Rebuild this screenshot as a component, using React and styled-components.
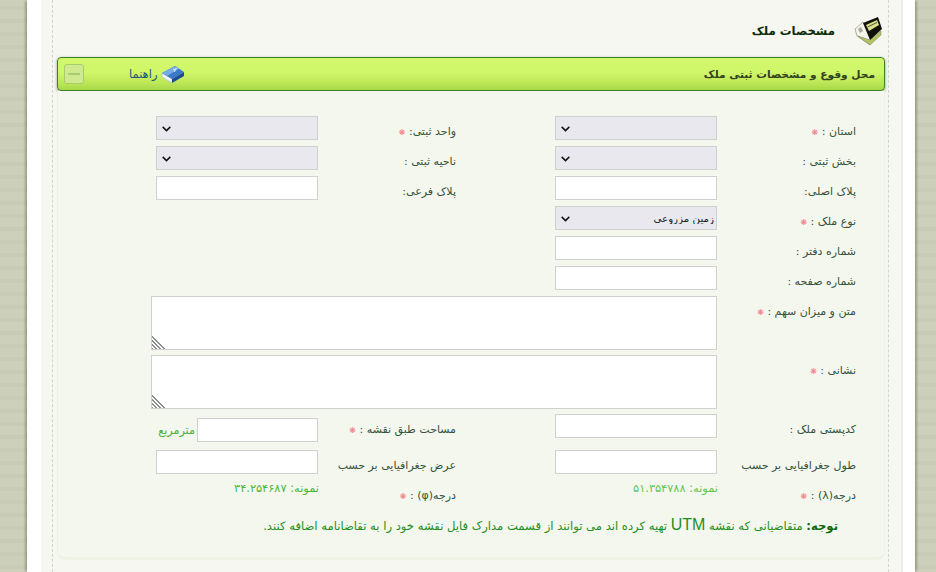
import React from "react";
import styled, { createGlobalStyle } from "styled-components";

const Global = createGlobalStyle`
  html, body { margin: 0; padding: 0; height: 572px; overflow: hidden; }
  body {
    background-color: #cbceb9;
    background-image:
      repeating-linear-gradient(0deg, rgba(255,255,255,.05) 0 3px, rgba(90,95,60,.025) 3px 7px, rgba(255,255,255,.035) 7px 13px);
  }
`;

const Sheet = styled.div`
  box-sizing: border-box;
  width: 888px;
  height: 572px;
  margin-left: 27px;
  padding: 0 12px 0 14px;
  background: #fff;
  box-shadow: -3px 0 2px -1px rgba(100, 104, 70, .45), 3px 0 2px -1px rgba(100, 104, 70, .45);
`;

const Inner = styled.div`
  box-sizing: border-box;
  height: 572px;
  padding: 0 12px 0 11px;
  background: #f5f7f0;
  border-right: 2px solid #e9ebe6;
`;

const Dashed = styled.div`
  box-sizing: border-box;
  height: 572px;
  padding: 0 3px 0 4px;
  border-left: 1px dashed #d2d5c8;
  border-right: 1px dashed #d2d5c8;
  direction: rtl;
  font-family: "DejaVu Sans", Tahoma, sans-serif;
`;

const Title = styled.div`
  display: flex;
  align-items: center;
  box-sizing: border-box;
  height: 57px;
  padding: 5px 2px 0 0;
  gap: 18px;
  color: #0d2c0d;
  font-size: 11.7px;
  font-weight: bold;
`;

const Bar = styled.div`
  box-sizing: border-box;
  display: flex;
  align-items: center;
  justify-content: space-between;
  height: 34px;
  padding: 0 9px 0 6px;
  border: 1px solid #3f7f23;
  border-radius: 4px;
  background: linear-gradient(#d2f76c 0%, #d0f66a 45%, #bfe858 75%, #a8d84a 100%);
  box-shadow: 0 1px 3px rgba(50, 90, 30, .55);
  color: #33421f;
  font-size: 10.6px;
  font-weight: bold;
`;

const BarTools = styled.div`
  display: flex;
  align-items: center;
`;

const Help = styled.span`
  display: inline-flex;
  align-items: center;
  gap: 4px;
  color: #1d5b70;
  font-size: 11.5px;
  font-weight: normal;
`;

const Collapse = styled.span`
  box-sizing: border-box;
  display: flex;
  align-items: center;
  justify-content: center;
  width: 20px;
  height: 20px;
  margin-right: 45px;
  border: 1px solid #a6cc70;
  border-radius: 3px;
  background: #cfe98e;
  &::before {
    content: "";
    width: 12px;
    height: 2px;
    background: #a8cc74;
  }
`;

const Panel = styled.div`
  box-sizing: border-box;
  height: 469px;
  padding: 25px 28px 0 0;
  border: solid #edf2e4;
  border-width: 0 1px 3px 1px;
  border-radius: 0 0 8px 8px;
  background: #f4f7ee;
`;

const Row = styled.div`
  display: grid;
  grid-template-columns: 139px 162px 99px 138px 162px;
  align-items: start;
  margin-top: ${(p) => p.$top ?? 6}px;
`;

const WideRow = styled(Row)`
  grid-template-columns: 139px 566px;
`;

const Label = styled.label`
  box-sizing: border-box;
  display: block;
  height: 24px;
  padding-top: 7px;
  color: #35523a;
  font-size: 11px;
  line-height: 17px;
  white-space: nowrap;
`;

const LabelCell = styled.div`
  grid-column: ${(p) => p.$col};
`;

const Star = styled.span`
  color: #f0737f;
  font-size: 8px;
  line-height: 1;
  font-weight: bold;
`;

const Select = styled.select`
  box-sizing: border-box;
  display: block;
  appearance: none;
  width: 162px;
  height: 24px;
  padding: 0 2px 0 20px;
  border: 1px solid #cfcfcf;
  border-radius: 0;
  background-color: #e8e8ee;
  background-image: url("data:image/svg+xml,%3Csvg xmlns='http://www.w3.org/2000/svg' width='9' height='6'%3E%3Cpath d='M.7.9 4.5 4.6 8.3.9' fill='none' stroke='%23111' stroke-width='1.5'/%3E%3C/svg%3E");
  background-repeat: no-repeat;
  background-position: 5px 9px;
  color: #222;
  font-family: "DejaVu Sans", sans-serif;
  font-size: 10.3px;
  outline: none;
`;

const Input = styled.input`
  box-sizing: border-box;
  display: block;
  width: ${(p) => p.$w || 162}px;
  height: 24px;
  border: 1px solid #d0d0cc;
  background: #fff;
  outline: none;
`;

const Area = styled.textarea`
  box-sizing: border-box;
  display: block;
  width: 566px;
  height: 54px;
  margin: 0;
  border: 1px solid #d0d0cc;
  background: #fff;
  outline: none;
  &::-webkit-resizer {
    background:
      linear-gradient(45deg, transparent 50%, #fff 50%),
      repeating-linear-gradient(45deg, #8b8b8b 0 1.4px, #fff 1.4px 2.8px);
  }
`;

const Unit = styled.div`
  display: flex;
  align-items: center;
  gap: 2px;
  margin-top: 4px;
  color: #4eae3a;
  font-size: 11.2px;
  white-space: nowrap;
`;

const Sample = styled.div`
  margin-right: -1px;
  padding-top: 6px;
  color: ${(p) => p.$color};
  font-size: 11.4px;
  line-height: 16px;
  white-space: nowrap;
`;

const Note = styled.p`
  margin: 11px 18px 0 0;
  color: #1f8f1f;
  font-size: 11.6px;
  line-height: 20px;
  white-space: nowrap;
  b { color: #0d6b0d; }
`;

const Latin = styled.span`
  font-family: "Liberation Sans", Arial, sans-serif;
  font-size: 16px;
`;

const HouseIcon = () => (
  <svg width="30" height="30" viewBox="0 0 30 30" aria-hidden="true">
    <path d="M2 13 L10 6 L20 20 L17 29 L4 20 Z" fill="#f4f4ec" stroke="#8f8f84" strokeWidth=".7" />
    <path d="M5 13 L8 11 L10 15 L7 17 Z" fill="#a8a89c" />
    <path d="M5 20 L17 29 L28 19 L28 15 L17 24 Z" fill="#b4c464" stroke="#76824a" strokeWidth=".5" />
    <path d="M10 7 L25 1 L29 13 L17 24 Z" fill="#111109" />
    <path d="M13 9 L24 4 L26 9 L16 15 Z" fill="#d8e08a" />
    <path d="M14.5 11 L24 6.5" stroke="#55583c" strokeWidth="1" />
  </svg>
);

const BookIcon = () => (
  <svg width="24" height="18" viewBox="0 0 24 18" aria-hidden="true">
    <path d="M1 8 L11 14 L11 18 L1 12 Z" fill="#eef2fa" stroke="#9db0cf" strokeWidth=".5" />
    <path d="M1 8 L14 1 L23 7 L11 14 Z" fill="#3d78c8" />
    <path d="M1 8 L14 1 L18 3.7 L6 11 Z" fill="#74ace8" />
    <path d="M11 14 L23 7 L23 11 L11 18 Z" fill="#1d4a98" />
    <path d="M12 5 L16 3.4 M13.5 7 L14.5 4" stroke="#dcebfa" strokeWidth="1" />
  </svg>
);

const Field = ({ text, req }) => (
  <Label>
    {text}
    {req && <> <Star>❋</Star></>}
  </Label>
);

const App = () => (
  <>
    <Global />
    <Sheet>
      <Inner>
        <Dashed>
          <Title>
            <HouseIcon />
            <span>مشخصات ملک</span>
          </Title>
          <Bar>
            <span>محل وقوع و مشخصات ثبتی ملک</span>
            <BarTools>
              <Help>
                <BookIcon />
                راهنما
              </Help>
              <Collapse />
            </BarTools>
          </Bar>
          <Panel>
            <Row $top={0}>
              <Field text="استان :" req />
              <Select><option></option></Select>
              <LabelCell $col="4"><Field text="واحد ثبتی:" req /></LabelCell>
              <Select><option></option></Select>
            </Row>
            <Row>
              <Field text="بخش ثبتی :" />
              <Select><option></option></Select>
              <LabelCell $col="4"><Field text="ناحیه ثبتی :" /></LabelCell>
              <Select><option></option></Select>
            </Row>
            <Row>
              <Field text="پلاک اصلی:" />
              <Input />
              <LabelCell $col="4"><Field text="پلاک فرعی:" /></LabelCell>
              <Input />
            </Row>
            <Row>
              <Field text="نوع ملک :" req />
              <Select defaultValue="z"><option value="z">زمین مزروعی</option></Select>
            </Row>
            <Row>
              <Field text="شماره دفتر :" />
              <Input />
            </Row>
            <Row>
              <Field text="شماره صفحه :" />
              <Input />
            </Row>
            <WideRow>
              <Field text="متن و میزان سهم :" req />
              <Area />
            </WideRow>
            <WideRow $top={5}>
              <Field text="نشانی :" req />
              <Area />
            </WideRow>
            <Row $top={5}>
              <Field text="کدپستی ملک :" />
              <Input />
              <LabelCell $col="4"><Field text="مساحت طبق نقشه :" req /></LabelCell>
              <Unit>
                <Input $w={121} />
                <span>مترمربع</span>
              </Unit>
            </Row>
            <Row $top={8}>
              <Field text="طول جغرافیایی بر حسب" />
              <div>
                <Input />
                <Sample $color="#62c550">نمونه: ۵۱.۳۵۴۷۸۸</Sample>
              </div>
              <LabelCell $col="4"><Field text="عرض جغرافیایی بر حسب" /></LabelCell>
              <div>
                <Input />
                <Sample $color="#45b83a">نمونه: ۳۴.۲۵۴۶۸۷</Sample>
              </div>
            </Row>
            <Row $top={-16}>
              <Field text="درجه(λ) :" req />
              <LabelCell $col="4"><Field text="درجه(φ) :" req /></LabelCell>
            </Row>
            <Note>
              <b>توجه:</b> متقاضیانی که نقشه <Latin>UTM</Latin> تهیه کرده اند می توانند از قسمت مدارک فایل نقشه خود را به تقاضانامه اضافه کنند.
            </Note>
          </Panel>
        </Dashed>
      </Inner>
    </Sheet>
  </>
);

export default App;
